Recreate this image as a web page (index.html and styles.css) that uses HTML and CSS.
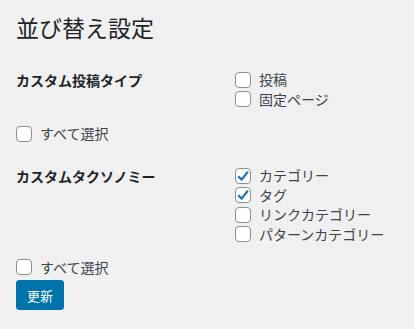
FILE: index.html
```html
<!DOCTYPE html>
<html lang="ja">
<head>
  <meta charset="UTF-8" />
  <meta name="viewport" content="width=device-width, initial-scale=1.0"/>
  <title>並び替え設定</title>
  <link rel="stylesheet" href="styles.css">
</head>
<body>
  <div class="wrap">
    <h1>並び替え設定</h1>

    <form>
      <!-- Post types -->
      <div class="section">
        <div class="section-title">カスタム投稿タイプ</div>
        <div class="options">
          <label class="check"><input type="checkbox"><span class="box"></span>投稿</label>
          <label class="check"><input type="checkbox"><span class="box"></span>固定ページ</label>
        </div>
      </div>
      <label class="check select-all"><input type="checkbox"><span class="box"></span>すべて選択</label>

      <!-- Taxonomies -->
      <div class="section second">
        <div class="section-title">カスタムタクソノミー</div>
        <div class="options">
          <label class="check"><input type="checkbox" checked><span class="box"><svg viewBox="0 0 16 16" width="16" height="16"><path d="M3.2 8.2 L6.6 11.6 L12.9 3.6" /></svg></span>カテゴリー</label>
          <label class="check"><input type="checkbox" checked><span class="box"><svg viewBox="0 0 16 16" width="16" height="16"><path d="M3.2 8.2 L6.6 11.6 L12.9 3.6" /></svg></span>タグ</label>
          <label class="check"><input type="checkbox"><span class="box"></span>リンクカテゴリー</label>
          <label class="check"><input type="checkbox"><span class="box"></span>パターンカテゴリー</label>
        </div>
      </div>
      <label class="check select-all last"><input type="checkbox"><span class="box"></span>すべて選択</label>

      <button type="button" class="button-primary">更新</button>
    </form>
  </div>
</body>
</html>
```

FILE: styles.css
```css
body {
  margin: 0;
  padding: 0;
  background: #f0f0f1;
  color: #3c434a;
  font-family: "Noto Sans CJK JP", "Noto Sans", sans-serif;
  font-size: 14px;
}

.wrap {
  padding: 12px 16px 0 16px;
}

h1 {
  margin: 0;
  font-size: 23px;
  font-weight: 400;
  line-height: 30px;
  color: #1d2327;
}

.section {
  display: flex;
  margin-top: 28px;
}

.section.second {
  margin-top: 22.5px;
}

.section-title {
  width: 219px;
  flex-shrink: 0;
  font-weight: 700;
  color: #1d2327;
  line-height: 19.5px;
  padding-top: 1px;
}

.options {
  display: flex;
  flex-direction: column;
}

.check {
  display: flex;
  align-items: center;
  height: 19.5px;
  line-height: 19.5px;
  cursor: pointer;
}

.check input {
  display: none;
}

.box {
  width: 16px;
  height: 16px;
  box-sizing: border-box;
  border: 1px solid #8c8f94;
  border-radius: 4px;
  background: #fff;
  margin-right: 8px;
  position: relative;
  flex-shrink: 0;
}

.box svg {
  position: absolute;
  left: -1px;
  top: -1px;
}

.box path {
  fill: none;
  stroke: #2271b1;
  stroke-width: 2.3;
}

.select-all {
  margin-top: 15px;
}

.select-all.last {
  margin-top: 13.5px;
}

.button-primary {
  display: block;
  margin-top: 3px;
  height: 30px;
  padding: 0 10px;
  background: #0073aa;
  border: 1px solid #0073aa;
  border-radius: 3px;
  color: #fff;
  font-family: inherit;
  font-size: 13px;
  cursor: pointer;
}
```
